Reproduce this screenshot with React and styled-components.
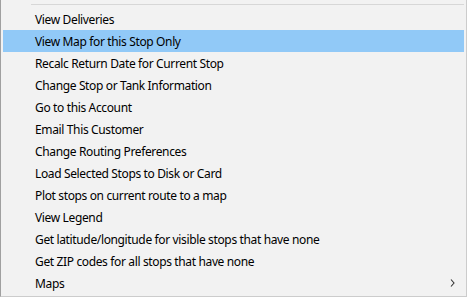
import React from "react";
import styled, { createGlobalStyle } from "styled-components";

const Global = createGlobalStyle`
  html, body { margin: 0; padding: 0; background: #f2f2f2; }
  body { width: 467px; height: 297px; overflow: hidden; }
`;

const Menu = styled.div`
  box-sizing: border-box;
  width: 467px;
  height: 297px;
  background: #f2f2f2;
  border-left: 1px solid #a0a0a0;
  border-right: 1px solid #cccccc;
  border-bottom: 1px solid #cccccc;
  padding: 0 2px 2px 2px;
  display: flex;
  flex-direction: column;
  font-family: "Noto Sans", "Open Sans", sans-serif;
  font-size: 12px;
  letter-spacing: -0.36px;
  color: #000;
`;

const Separator = styled.div`
  height: 8px;
  display: flex;
  align-items: center;
  padding-left: 28px;
  &::after {
    content: "";
    flex: 1;
    height: 1px;
    background: #d7d7d7;
  }
`;

const Item = styled.div`
  height: 22px;
  display: flex;
  align-items: center;
  padding-left: 32px;
  padding-right: 8px;
  background: ${(p) => (p.$active ? "#91c9f7" : "transparent")};
  white-space: nowrap;
`;

const Label = styled.span`
  flex: 1;
`;

const Arrow = styled.svg`
  width: 5px;
  height: 8px;
  margin-right: 1px;
`;

const items = [
  "View Deliveries",
  "View Map for this Stop Only",
  "Recalc Return Date for Current Stop",
  "Change Stop or Tank Information",
  "Go to this Account",
  "Email This Customer",
  "Change Routing Preferences",
  "Load Selected Stops to Disk or Card",
  "Plot stops on current route to a map",
  "View Legend",
  "Get latitude/longitude for visible stops that have none",
  "Get ZIP codes for all stops that have none",
];

export default function App() {
  return (
    <>
      <Global />
      <Menu>
        <Separator />
        {items.map((t, i) => (
          <Item key={t} $active={i === 1}>
            <Label>{t}</Label>
          </Item>
        ))}
        <Item>
          <Label>Maps</Label>
          <Arrow viewBox="0 0 5 8">
            <path d="M1 0.5 L4 4 L1 7.5" fill="none" stroke="#333" strokeWidth="1.1" />
          </Arrow>
        </Item>
      </Menu>
    </>
  );
}
